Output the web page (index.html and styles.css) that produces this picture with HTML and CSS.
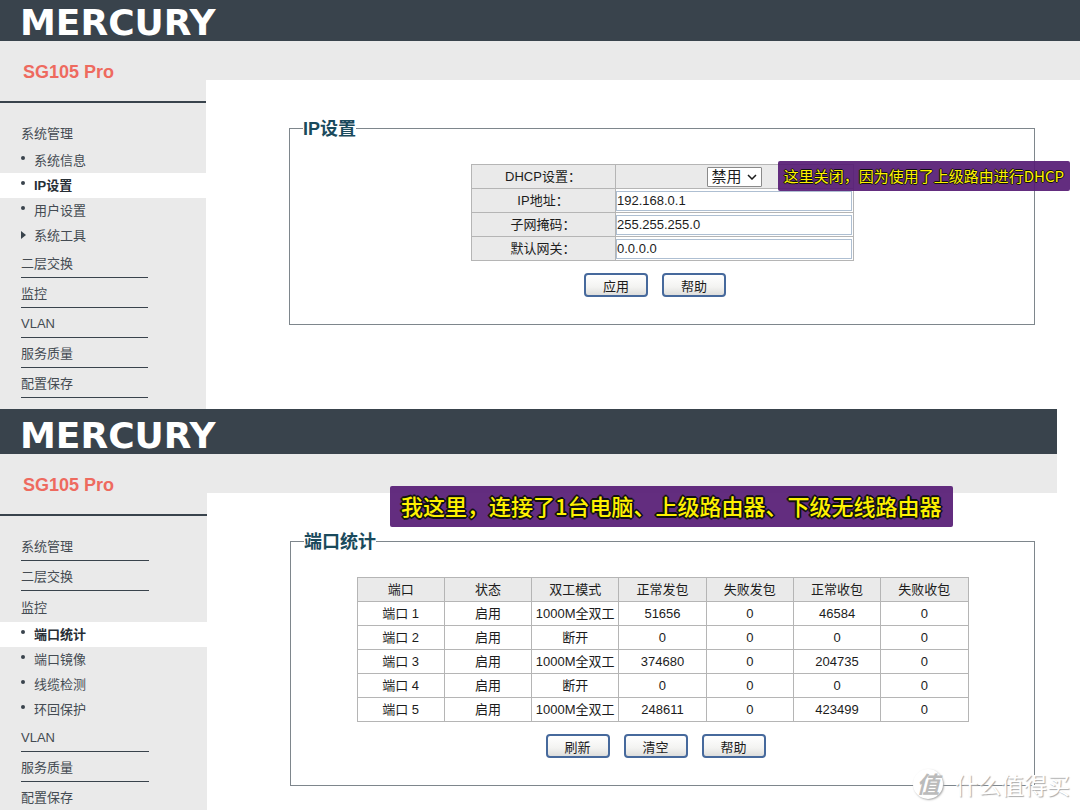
FILE: index.html
```html
<!DOCTYPE html>
<html lang="zh-CN">
<head>
<meta charset="utf-8">
<title>MERCURY SG105 Pro</title>
<link rel="stylesheet" href="styles.css">
</head>
<body>
<section class="screen screen-ip">
  <header class="brand-bar"><span class="brand">MERCURY</span></header>
  <div class="layout">
    <nav class="sidebar" aria-label="IP设置导航">
      <h1 class="model">SG105 Pro</h1>
      <ul class="menu">
        <li><a class="group open" href="#">系统管理</a>
          <ul class="submenu">
            <li><a class="sub" href="#">系统信息</a></li>
            <li><a class="sub active" href="#">IP设置</a></li>
            <li><a class="sub" href="#">用户设置</a></li>
            <li><a class="sub folder" href="#">系统工具</a></li>
          </ul>
        </li>
        <li><a class="group" href="#">二层交换</a></li>
        <li><a class="group" href="#">监控</a></li>
        <li><a class="group" href="#">VLAN</a></li>
        <li><a class="group" href="#">服务质量</a></li>
        <li><a class="group" href="#">配置保存</a></li>
      </ul>
    </nav>
    <main class="content">
      <form>
        <fieldset class="panel">
          <legend>IP设置</legend>
          <table class="form-table">
            <tr><th><label for="dhcp">DHCP设置：</label></th><td class="select-cell"><span class="select-wrap"><select id="dhcp"><option>禁用</option><option>启用</option></select><svg class="chevron" viewBox="0 0 10 6" aria-hidden="true"><path d="M1 1l4 4 4-4"/></svg></span></td></tr>
            <tr><th><label for="ip">IP地址：</label></th><td><input id="ip" type="text" value="192.168.0.1"></td></tr>
            <tr><th><label for="mask">子网掩码：</label></th><td><input id="mask" type="text" value="255.255.255.0"></td></tr>
            <tr><th><label for="gateway">默认网关：</label></th><td><input id="gateway" type="text" value="0.0.0.0"></td></tr>
          </table>
          <div class="actions">
            <button type="button">应用</button>
            <button type="button">帮助</button>
          </div>
        </fieldset>
      </form>
    </main>
  </div>
  <p class="note note-small">这里关闭，因为使用了上级路由进行DHCP</p>
</section>

<section class="screen screen-ports">
  <header class="brand-bar"><span class="brand">MERCURY</span></header>
  <div class="layout">
    <nav class="sidebar" aria-label="端口统计导航">
      <h1 class="model">SG105 Pro</h1>
      <ul class="menu">
        <li><a class="group" href="#">系统管理</a></li>
        <li><a class="group" href="#">二层交换</a></li>
        <li><a class="group open" href="#">监控</a>
          <ul class="submenu">
            <li><a class="sub active" href="#">端口统计</a></li>
            <li><a class="sub" href="#">端口镜像</a></li>
            <li><a class="sub" href="#">线缆检测</a></li>
            <li><a class="sub" href="#">环回保护</a></li>
          </ul>
        </li>
        <li><a class="group" href="#">VLAN</a></li>
        <li><a class="group" href="#">服务质量</a></li>
        <li><a class="group last" href="#">配置保存</a></li>
      </ul>
    </nav>
    <main class="content">
      <form>
        <fieldset class="panel">
          <legend>端口统计</legend>
          <table class="stats">
            <thead><tr><th>端口</th><th>状态</th><th>双工模式</th><th>正常发包</th><th>失败发包</th><th>正常收包</th><th>失败收包</th></tr></thead>
            <tbody>
              <tr><td>端口 1</td><td>启用</td><td>1000M全双工</td><td>51656</td><td>0</td><td>46584</td><td>0</td></tr>
              <tr><td>端口 2</td><td>启用</td><td>断开</td><td>0</td><td>0</td><td>0</td><td>0</td></tr>
              <tr><td>端口 3</td><td>启用</td><td>1000M全双工</td><td>374680</td><td>0</td><td>204735</td><td>0</td></tr>
              <tr><td>端口 4</td><td>启用</td><td>断开</td><td>0</td><td>0</td><td>0</td><td>0</td></tr>
              <tr><td>端口 5</td><td>启用</td><td>1000M全双工</td><td>248611</td><td>0</td><td>423499</td><td>0</td></tr>
            </tbody>
          </table>
          <div class="actions">
            <button type="button">刷新</button>
            <button type="button">清空</button>
            <button type="button">帮助</button>
          </div>
        </fieldset>
      </form>
    </main>
  </div>
  <p class="note note-large">我这里，连接了1台电脑、上级路由器、下级无线路由器</p>
  <div class="watermark"><span class="seal">值</span><span>什么值得买</span></div>
</section>
</body>
</html>
```

FILE: styles.css
```css
* { box-sizing: border-box; }

body {
  margin: 0;
  background: #fff;
  color: #1c1c1c;
  font: 13px/20px "Liberation Sans", "Noto Sans CJK SC", sans-serif;
}

.screen { position: relative; }

.brand-bar {
  display: flex;
  align-items: center;
  height: 41px;
  padding: 4px 0 0 20px;
  background: #39434c;
}

.brand {
  color: #fff;
  font: bold 36px/36px "DejaVu Sans", sans-serif;
}

.screen-ports .brand-bar {
  height: 45px;
  padding-top: 9px;
}

.screen-ports .brand-bar,
.screen-ports .layout { margin-right: 23px; }

.screen-ip .layout { min-height: 368px; }

.layout {
  display: grid;
  grid-template-columns: 206px 1fr;
}

.screen-ports .layout { grid-template-columns: 207px 1fr; }

.sidebar { background: #eaeaea; }

.model {
  margin: 0 0 20px;
  padding: 20px 0 17px 23px;
  border-bottom: 2px solid #39434c;
  color: #ee6a5f;
  font-size: 18px;
  line-height: 23px;
}

.screen-ports .model { margin-bottom: 15px; }

.menu, .submenu {
  margin: 0;
  padding: 0;
  list-style: none;
}

.menu a {
  display: block;
  color: #444b52;
  text-decoration: none;
}

.group {
  margin: 0 58px 0 21px;
  height: 30px;
  padding-top: 6px;
  border-bottom: 1px solid #39434c;
}

.group.open, .group.last { border-bottom: 0; }
.screen-ip .group.open { height: 25px; padding-top: 1px; }
.screen-ports .group.open { height: 31px; padding-top: 7px; }

.menu .sub {
  position: relative;
  height: 25px;
  padding: 3px 0 2px 34px;
}

.menu .sub::before {
  content: "";
  position: absolute;
  left: 21px;
  top: 8px;
  width: 4px;
  height: 4px;
  border-radius: 50%;
  background: #39434c;
}

.menu .folder::before {
  width: 5px;
  height: 8px;
  border-radius: 0;
  clip-path: polygon(0 0, 100% 50%, 0 100%);
}

.menu .active {
  background: #fff;
  color: #272e35;
  font-weight: bold;
}

.content {
  padding: 36px 45px 20px 83px;
  border-top: 39px solid #eaeaea;
}

.screen-ports .content {
  padding-right: 22px;
}

.panel {
  margin: 0;
  min-width: 0;
  padding: 24px 0 27px;
  border: 1px solid #7e868c;
}

.panel legend {
  margin-left: 13px;
  padding: 2px 0 0;
  color: #1a4a5c;
  font-size: 18px;
  font-weight: bold;
  line-height: 22px;
}

table {
  margin: 0 auto;
  border-collapse: collapse;
  table-layout: fixed;
  text-align: center;
}

th, td {
  height: 24px;
  padding: 0;
  border: 1px solid #b5b5b5;
}

th {
  background: #eaeaea;
  font-weight: normal;
}

.form-table { width: 383px; }
.form-table th { width: 144px; }
.select-cell { background: #eaeaea; }

.form-table input {
  display: block;
  width: calc(100% - 1px);
  height: 20px;
  margin: 0 auto;
  padding: 0;
  border: 1px solid #aebfd2;
  background: #fff;
  color: #1c1c1c;
  font: inherit;
}

.select-wrap {
  position: relative;
  display: block;
  width: 55px;
  margin: 0 auto;
}

.select-wrap select {
  display: block;
  appearance: none;
  width: 100%;
  height: 20px;
  padding: 0 0 0 4px;
  border: 1px solid #8a8a8a;
  border-radius: 1px;
  background: #fff;
  color: #1c1c1c;
  font: 15px/18px "Liberation Sans", "Noto Sans CJK SC", sans-serif;
}

.chevron {
  position: absolute;
  right: 5px;
  top: 7px;
  width: 10px;
  height: 6px;
  fill: none;
  stroke: #1c1c1c;
  stroke-width: 1.5;
  pointer-events: none;
}

.stats { width: 612px; }

.actions {
  display: flex;
  justify-content: center;
  gap: 14px;
  margin-top: 12px;
  padding-right: 14px;
}

.actions button {
  width: 64px;
  height: 24px;
  padding: 3px 0 0;
  border: 2px solid #46699c;
  border-radius: 4px;
  background: linear-gradient(#fff, #f3f3f1 60%, #dededc);
  color: #1c1c1c;
  font: 13px/18px "Liberation Sans", "Noto Sans CJK SC", sans-serif;
}

.note {
  position: absolute;
  margin: 0;
  border-radius: 2px;
  background: rgba(86, 27, 116, 0.92);
  color: #fff200;
  font-family: "Noto Sans CJK SC", sans-serif;
  font-weight: 400;
  white-space: nowrap;
  text-shadow: 1px 0 #111, -1px 0 #111, 0 1px #111, 0 -1px #111;
}

.note-small {
  top: 161px;
  right: 10px;
  padding: 0 6px 1px;
  font-size: 15px;
  line-height: 29px;
}

.note-large {
  top: 77px;
  left: 390px;
  padding: 0 11px 3px;
  font-size: 22px;
  font-weight: 500;
  line-height: 38px;
  text-shadow: 2px 0 #111, -2px 0 #111, 0 2px #111, 0 -2px #111, 1px 1px #111, -1px -1px #111, 1px -1px #111, -1px 1px #111;
}

.watermark {
  position: absolute;
  right: 10px;
  bottom: 12px;
  display: flex;
  align-items: center;
  gap: 12px;
  color: #fff;
  font: 23px/32px "Noto Sans CJK SC", sans-serif;
  text-shadow: 1px 1px 1px #aaa;
}

.seal {
  width: 30px;
  height: 30px;
  border-radius: 50%;
  background: #fff;
  box-shadow: 1px 1px 2px #aaa;
  color: #bbb;
  font-style: italic;
  font-weight: bold;
  line-height: 28px;
  text-align: center;
  text-shadow: none;
}
```
